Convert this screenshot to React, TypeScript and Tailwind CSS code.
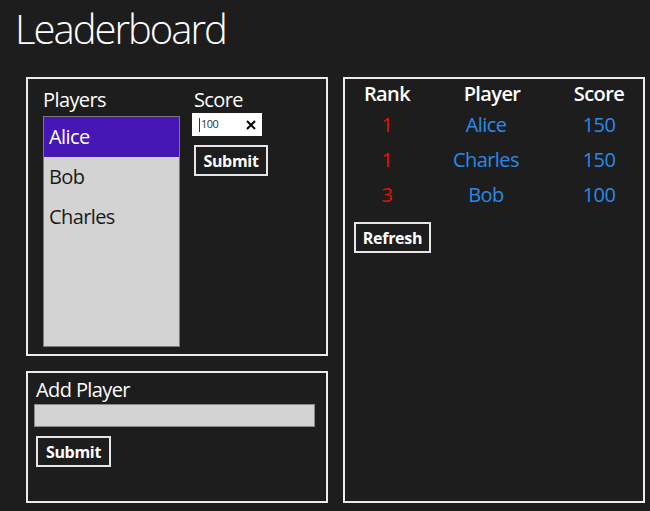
const players = ['Alice', 'Bob', 'Charles'];

const standings = [
  { rank: 1, name: 'Alice', score: 150 },
  { rank: 1, name: 'Charles', score: 150 },
  { rank: 3, name: 'Bob', score: 100 },
];

const OutlineButton = ({ label, className = '' }: { label: string; className?: string }) => (
  <button
    className={`h-[31px] border-2 border-[#e6e6e6] px-[6px] text-[16px] leading-none font-bold tracking-[-0.3px] text-white ${className}`}
  >
    {label}
  </button>
);

export default function App() {
  return (
    <div
      className="h-[511px] w-[650px] overflow-hidden bg-[#1d1d1d] tracking-[-0.6px] text-white"
      style={{ fontFamily: '"Open Sans", "Noto Sans", sans-serif' }}
    >
      <h1 className="h-[77px] pt-[5px] pl-[15px] text-[40px] leading-[48px] font-light tracking-[-2px]">
        Leaderboard
      </h1>

      <div className="flex gap-[15px] pl-[26px]">
        <div className="flex w-[302px] flex-col gap-[15px]">
          {/* score entry */}
          <div className="flex h-[279px] border-2 border-[#ececec] pt-[7px] pl-[15px]">
            <div className="flex w-[137px] flex-col">
              <div className="text-[20px] leading-[28px]">Players</div>
              <ul className="mt-[2px] h-[231px] border border-[#7a7a7a] bg-[#d3d3d3]">
                {players.map((p, i) => (
                  <li
                    key={p}
                    className={`pl-[5px] text-[20px] leading-[40px] ${
                      i === 0 ? 'bg-[#4617b4] text-white' : 'text-[#1a1a1a]'
                    }`}
                  >
                    {p}
                  </li>
                ))}
              </ul>
            </div>
            <div className="ml-[12px] flex flex-col">
              <div className="pl-[2px] text-[20px] leading-[28px]">Score</div>
              <div className="-mt-px flex h-[23px] w-[70px] items-center bg-white pr-[6px] pl-[7px]">
                <span className="mr-[1px] h-[14px] w-px bg-[#333]" />
                <span className="flex-1 text-[11px] tracking-[-0.5px] text-[#333]">100</span>
                <svg width="10" height="10" viewBox="0 0 10 10">
                  <path d="M1 1 L9 9 M9 1 L1 9" stroke="#000" strokeWidth="2" />
                </svg>
              </div>
              <OutlineButton label="Submit" className="mt-[9px] ml-[2px] w-[74px]" />
            </div>
          </div>

          {/* add player */}
          <div className="flex h-[132px] flex-col border-2 border-[#ececec] pt-[3px] pl-[6px]">
            <div className="pl-[2px] text-[20px] leading-[28px]">Add Player</div>
            <input className="h-[23px] w-[281px] border border-[#8a8a8a] bg-[#d3d3d3] outline-none" />
            <OutlineButton label="Submit" className="mt-[9px] ml-[2px] w-[75px]" />
          </div>
        </div>

        {/* standings */}
        <div className="h-[426px] w-[302px] border-2 border-[#ececec] pt-[2px]">
          <div className="grid grid-cols-[84px_126px_88px] text-center text-[20px] leading-[26px] font-semibold">
            <div>Rank</div>
            <div>Player</div>
            <div>Score</div>
          </div>
          {standings.map((s) => (
            <div
              key={s.name}
              className="grid grid-cols-[84px_126px_88px] text-center text-[20px] leading-[35px]"
            >
              <div className="text-[#e51400]">{s.rank}</div>
              <div className="pr-[12px] text-[#2a8ae8]">{s.name}</div>
              <div className="text-[#2a8ae8]">{s.score}</div>
            </div>
          ))}
          <OutlineButton label="Refresh" className="mt-[10px] ml-[9px] w-[77px]" />
        </div>
      </div>
    </div>
  );
}
